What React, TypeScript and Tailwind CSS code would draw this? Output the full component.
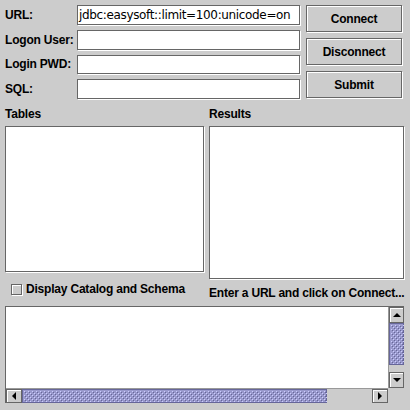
import React from 'react'

const font = "font-['Liberation_Sans',Arial,sans-serif]"
const flush = 'border border-[#666666] shadow-[1px_1px_0_#ffffff]'

function Field({ value = '' }: { value?: string }) {
  return (
    <div className={`h-[20px] w-[223px] bg-white ${flush} flex items-center px-[1px]`}>
      <span className="text-[12px] font-['DejaVu_Sans',sans-serif] tracking-[-0.35px] text-black leading-none whitespace-nowrap">
        {value}
      </span>
    </div>
  )
}

function Button({ label }: { label: string }) {
  return (
    <div
      className={`h-[27px] w-[96px] bg-[#cccccc] border border-[#666666] shadow-[inset_1px_1px_0_#ffffff,1px_1px_0_#ffffff] flex items-center justify-center text-[12px] font-bold tracking-[-0.2px] text-black`}
    >
      {label}
    </div>
  )
}

function Bumps({ id }: { id: string }) {
  return (
    <svg className="absolute inset-[1px]" width="100%" height="100%">
      <defs>
        <pattern id={id} width="4" height="4" patternUnits="userSpaceOnUse">
          <rect x="0" y="0" width="1" height="1" fill="#ccccff" />
          <rect x="2" y="2" width="1" height="1" fill="#ccccff" />
          <rect x="1" y="1" width="1" height="1" fill="#666699" />
          <rect x="3" y="3" width="1" height="1" fill="#666699" />
        </pattern>
      </defs>
      <rect width="100%" height="100%" fill={`url(#${id})`} />
    </svg>
  )
}

function Arrow({ dir }: { dir: 'up' | 'down' | 'left' | 'right' }) {
  const pts = {
    up: '0,4 8,4 4,0',
    down: '0,0 8,0 4,4',
    left: '4,0 4,8 0,4',
    right: '0,0 0,8 4,4',
  }[dir]
  const vertical = dir === 'up' || dir === 'down'
  return (
    <svg width={vertical ? 8 : 4} height={vertical ? 4 : 8}>
      <polygon points={pts} fill="#000000" />
    </svg>
  )
}

function ArrowButton({ dir, className = '' }: { dir: 'up' | 'down' | 'left' | 'right'; className?: string }) {
  return (
    <div
      className={`bg-[#cccccc] border border-[#666666] shadow-[inset_1px_1px_0_#ffffff] flex items-center justify-center ${className}`}
    >
      <Arrow dir={dir} />
    </div>
  )
}

export default function App() {
  return (
    <div className={`w-[410px] h-[410px] bg-[#cccccc] pt-[5px] pl-[5px] pr-[6px] flex flex-col ${font} text-black tracking-[-0.2px]`}>
      {/* connection form */}
      <div className="h-[94px] flex">
        <div className="w-[72px] shrink-0 flex flex-col gap-[5px] text-[12px] font-bold">
          <div className="h-[20px] flex items-center">URL:</div>
          <div className="h-[20px] flex items-center">Logon User:</div>
          <div className="h-[20px] flex items-center">Login PWD:</div>
          <div className="h-[20px] flex items-center">SQL:</div>
        </div>
        <div className="flex flex-col gap-[5px]">
          <Field value="jdbc:easysoft::limit=100:unicode=on" />
          <Field />
          <Field />
          <Field />
        </div>
        <div className="ml-[6px] flex flex-col gap-[6px]">
          <Button label="Connect" />
          <Button label="Disconnect" />
          <Button label="Submit" />
        </div>
      </div>

      {/* tables / results */}
      <div className="flex gap-[5px]">
        <div className="w-[199px] shrink-0 flex flex-col">
          <div className="h-[27px] pt-[3px] flex items-center text-[12px] font-bold">Tables</div>
          <div className={`h-[146px] bg-white ${flush}`} />
          <div className="h-[34px] flex items-center gap-[4px] pl-[6px] text-[12px] font-bold">
            <div className={`w-[11px] h-[11px] bg-[#cccccc] border border-[#666666] shadow-[inset_1px_1px_0_#ffffff,1px_1px_0_#ffffff]`} />
            <span>Display Catalog and Schema</span>
          </div>
        </div>
        <div className="flex-1 min-w-0 flex flex-col">
          <div className="h-[27px] pt-[3px] flex items-center text-[12px] font-bold">Results</div>
          <div className={`h-[153px] bg-white ${flush}`} />
          <div className="h-[27px] flex items-center text-[12px] font-bold whitespace-nowrap">
            Enter a URL and click on Connect...
          </div>
        </div>
      </div>

      {/* message area */}
      <div className="h-[97px] border-t border-l border-[#666666] grid grid-cols-[1fr_16px] grid-rows-[1fr_15px]">
        <div className="bg-white" />
        <div className="bg-[#cccccc] border-l border-[#999999] flex flex-col">
          <ArrowButton dir="up" className="h-[16px]" />
          <div className="relative h-[42px] bg-[#9999cc] border border-[#666699]">
            <Bumps id="vbumps" />
          </div>
          <div className="flex-1" />
          <ArrowButton dir="down" className="h-[16px]" />
        </div>
        <div className="bg-[#cccccc] border-t border-[#999999] flex">
          <ArrowButton dir="left" className="w-[16px]" />
          <div className="relative w-[305px] bg-[#9999cc] border border-[#666699]">
            <Bumps id="hbumps" />
          </div>
          <div className="flex-1" />
          <ArrowButton dir="right" className="w-[16px]" />
        </div>
        <div className="bg-[#cccccc]" />
      </div>
    </div>
  )
}
